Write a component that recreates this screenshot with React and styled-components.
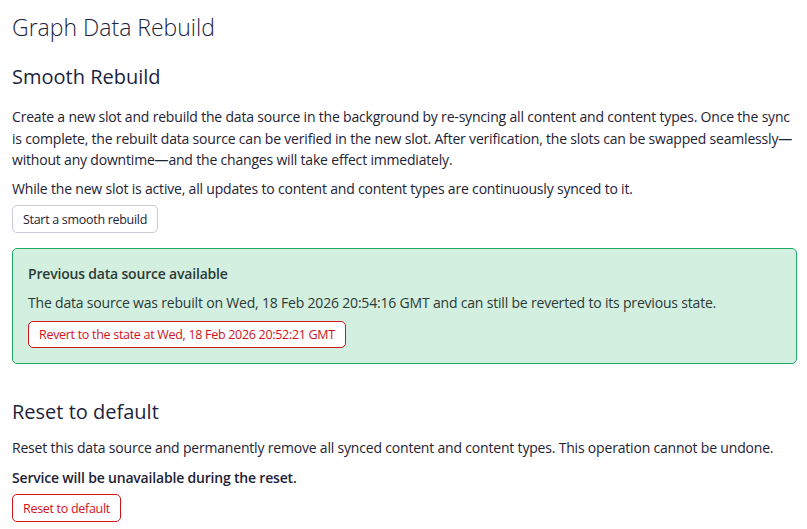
import React from 'react';
import styled, { createGlobalStyle } from 'styled-components';

const GlobalStyle = createGlobalStyle`
  body {
    margin: 0;
    background: #fff;
    color: #1e2235;
    font-family: 'Open Sans', 'Noto Sans', sans-serif;
    font-size: 14px;
    letter-spacing: -0.19px;
  }
`;

const Page = styled.div`
  padding: 11px 10px 0 12px;
`;

const Title = styled.h1`
  margin: 0;
  font-size: 23px;
  line-height: 32px;
  font-weight: 300;
  letter-spacing: 0;
  color: #1c1f3e;
`;

const SectionTitle = styled.h2`
  margin: ${(p) => p.$top || '20px'} 0 0;
  font-size: 20px;
  line-height: 28px;
  font-weight: 400;
  letter-spacing: 0;
  color: #1c1f3e;
`;

const Text = styled.p`
  margin: ${(p) => p.$top || '7px'} 0 0;
  line-height: 21.5px;
  font-weight: ${(p) => (p.$bold ? 600 : 400)};
`;

const Button = styled.button`
  display: inline-block;
  margin-top: ${(p) => p.$top || '6px'};
  height: ${(p) => p.$h || '28px'};
  padding: 0 10px;
  font-family: inherit;
  font-size: 12.5px;
  letter-spacing: -0.3px;
  background: #fff;
  color: ${(p) => (p.$danger ? '#d0121b' : '#1e2235')};
  border: 1px solid ${(p) => (p.$danger ? '#d0121b' : '#c9ccd4')};
  border-radius: 5px;
  cursor: pointer;
`;

const Notice = styled.div`
  margin-top: 15px;
  padding: 14px 15px 15px;
  background: #d3efe0;
  border: 1px solid #1faa66;
  border-radius: 5px;
`;

const NoticeTitle = styled.div`
  line-height: 21px;
  font-weight: 600;
  color: #2b3a36;
`;

const NoticeText = styled.div`
  margin-top: 8px;
  line-height: 21px;
  color: #2b3a36;
`;

export default function App() {
  return (
    <>
      <GlobalStyle />
      <Page>
        <Title>Graph Data Rebuild</Title>
        <SectionTitle>Smooth Rebuild</SectionTitle>
        <Text $top="15px">
          Create a new slot and rebuild the data source in the background by re-syncing all content and content types. Once the sync is complete, the rebuilt data source can be verified in the new slot. After verification, the slots can be swapped seamlessly—without any downtime—and the changes will take effect immediately.
        </Text>
        <Text>While the new slot is active, all updates to content and content types are continuously synced to it.</Text>
        <Button>Start a smooth rebuild</Button>
        <Notice>
          <NoticeTitle>Previous data source available</NoticeTitle>
          <NoticeText>
            The data source was rebuilt on Wed, 18 Feb 2026 20:54:16 GMT and can still be reverted to its previous state.
          </NoticeText>
          <Button $danger $top="8px" $h="27px">Revert to the state at Wed, 18 Feb 2026 20:52:21 GMT</Button>
        </Notice>
        <SectionTitle $top="34px">Reset to default</SectionTitle>
        <Text $top="11px">
          Reset this data source and permanently remove all synced content and content types. This operation cannot be undone.
        </Text>
        <Text $bold $top="8px">Service will be unavailable during the reset.</Text>
        <Button $danger>Reset to default</Button>
      </Page>
    </>
  );
}
